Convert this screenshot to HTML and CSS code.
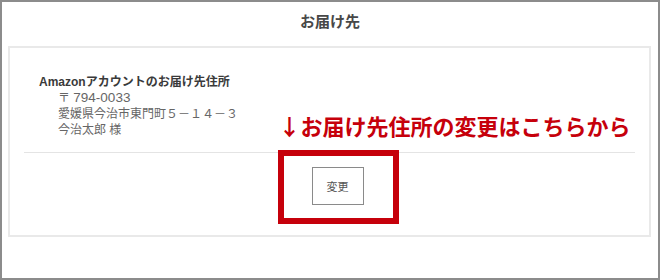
FILE: index.html
```html
<!DOCTYPE html>
<html lang="ja">

<head>
    <title>お届け先</title>
    <meta charset="utf-8">
    <meta name="viewport" content="width=device-width, initial-scale=1">
    <link rel="stylesheet" href="styles.css">
</head>

<body>
    <div class="page">
        <h2 class="page-title">お届け先</h2>
        <div class="address-box">
            <div class="address">
                <p class="address-label">Amazonアカウントのお届け先住所</p>
                <p class="address-line">〒 <span class="zip">794-0033</span></p>
                <p class="address-line">愛媛県今治市東門町５－１４－３</p>
                <p class="address-line">今治太郎 様</p>
            </div>
            <div class="actions">
                <span class="change-wrap">
                    <span class="note">↓お届け先住所の変更はこちらから</span>
                    <span class="highlight"></span>
                    <button class="change-btn">変更</button>
                </span>
            </div>
        </div>
    </div>
</body>

</html>
```

FILE: styles.css
```css
* {
    margin: 0;
    padding: 0;
    box-sizing: border-box;
}

body {
    margin: 0;
    background-color: #fff;
    font-family: "Noto Sans CJK JP", "Noto Sans", sans-serif;
    color: #333;
}

.page {
    width: 660px;
    height: 280px;
    border: 2px solid #8c8c8c;
}

.page-title {
    font-size: 15px;
    font-weight: 700;
    line-height: 20px;
    color: #484848;
    text-align: center;
    padding: 9px 0 15px;
}

/* address card */
.address-box {
    margin: 0 7px 0 6px;
    border: 2px solid #e9e9e9;
    padding: 0 14px;
}

.address {
    padding: 26px 15px 14px;
    border-bottom: 1px solid #e4e4e4;
    font-family: "Liberation Sans", "Noto Sans CJK JP", sans-serif;
}

.address p {
    font-size: 12px;
    line-height: 16px;
}

.address-label {
    font-weight: 700;
    color: #3a3a3a;
}

.address-line {
    padding-left: 19px;
    color: #666;
}

.zip {
    font-size: 13.5px;
}

.actions {
    display: flex;
    justify-content: center;
    padding: 14px 0 30px 16px;
}

.change-wrap {
    position: relative;
    display: block;
}

.change-btn {
    display: block;
    width: 52px;
    height: 38px;
    background: #fff;
    border: 1px solid #8a8a8a;
    font-family: "Noto Sans CJK JP", sans-serif;
    font-size: 11px;
    color: #555;
}

/* red annotation */
.highlight {
    position: absolute;
    left: -34px;
    top: -17px;
    width: 121px;
    height: 74px;
    border: 6px solid #c6000b;
}

.note {
    position: absolute;
    left: -33px;
    top: -53px;
    white-space: nowrap;
    font-size: 22px;
    line-height: 1;
    font-weight: 700;
    color: #c6000b;
}
```
